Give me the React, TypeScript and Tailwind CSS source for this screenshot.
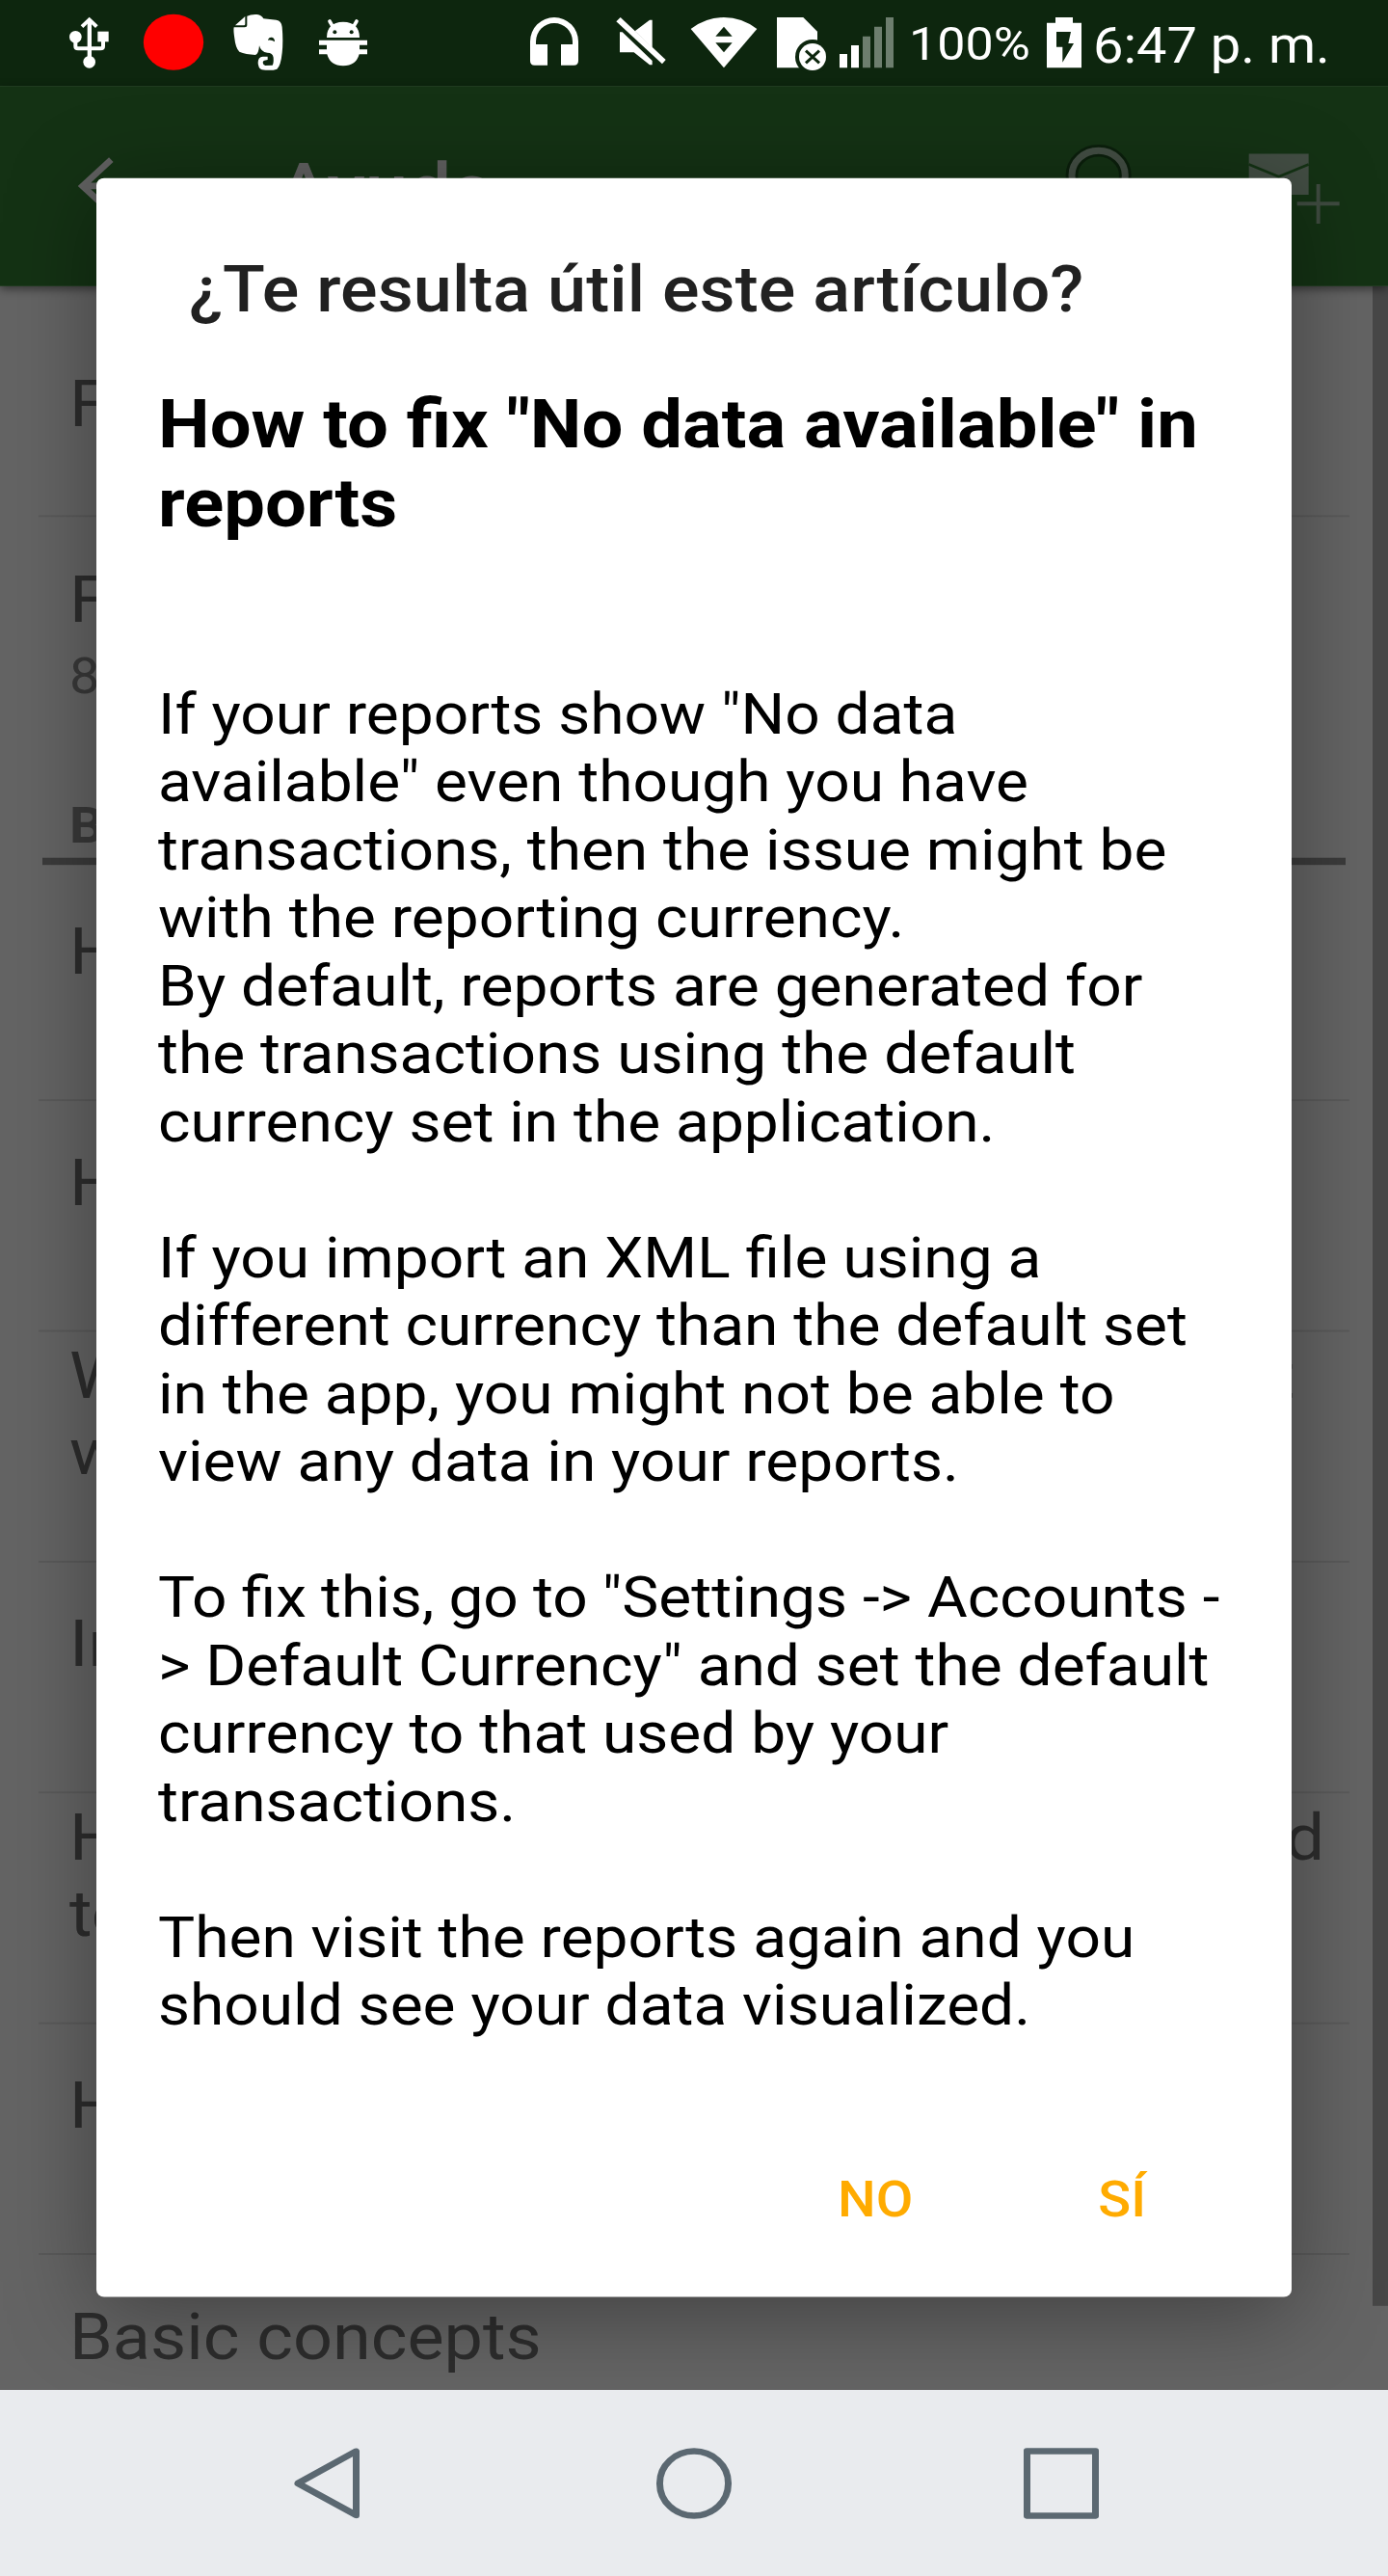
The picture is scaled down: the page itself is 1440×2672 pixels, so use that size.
import type { ReactNode } from "react";

/* Status bar glyph: drawn on a 3:2.783 grid that shares one vertical extent. */
function Glyph({ x, w, className, children }: { x: number; w: number; className: string; children: ReactNode }) {
  return (
    <svg viewBox={`${x} 40 ${w} 190`} preserveAspectRatio="none" className={`h-[68.27px] shrink-0 fill-white ${className}`}>
      {children}
    </svg>
  );
}

const DARK = "#0d260e";

function StatusBar() {
  return (
    <header className="flex h-24 items-start bg-[#0d260e] pt-[14.4px] text-white">
      <Glyph x={210} w={135} className="ml-[70px] w-[45px]">
        <rect x="272" y="70" width="13" height="120" />
        <path d="M278 54 L305 80 L297 88 L278 70 L259 88 L251 80 Z" />
        <circle cx="278" cy="194" r="19" />
        <circle cx="235" cy="116" r="19" />
        <rect x="304" y="99" width="34" height="32" />
        <path d="M235 128 V145 Q235 152 243 152 H313 Q321 152 321 145 V128" fill="none" stroke="#fff" strokeWidth="12" />
      </Glyph>
      <Glyph x={441} w={198} className="ml-8 w-[66px]">
        <ellipse cx="540" cy="132.500" rx="93.500" ry="87" fill="#ff0000" />
      </Glyph>
      <Glyph x={720} w={168} className="ml-[27px] w-[56px]">
        <path d="M732 80 L763 52 L763 76 Q763 80 759 80 Z" />
        <path d="M769 51 Q780 45 800 46 Q815 48 820 59 L860 63 Q876 65 878 85 Q882 130 878 165 Q874 205 862 216 Q845 222 815 218 Q803 212 803 196 Q803 178 818 177 L833 177 L833 187 L823 189 Q818 190 818 196 Q819 204 826 205 L848 204 Q852 198 851 180 Q849 165 832 165 Q812 163 807 143 Q805 170 795 172 Q765 170 745 162 Q733 150 730 120 Q726 95 728 86 L762 86 Q769 86 769 80 Z" />
        <path d="M834 126 Q836 116 846 117 Q855 119 855 131 Q845 124 834 126 Z" fill={DARK} />
      </Glyph>
      <Glyph x={984} w={168} className="ml-8 w-[56px]">
        <path d="M1017 118 Q1017 70 1068 69 Q1119 70 1119 118 Z" />
        <path d="M1026 67 L1037 86 M1110 67 L1099 86" stroke="#fff" strokeWidth="11" strokeLinecap="round" />
        <circle cx="1042" cy="101" r="6" fill={DARK} />
        <circle cx="1094" cy="101" r="6" fill={DARK} />
        <path d="M993 126 H1143 V141 H1119 V155 H1143 V170 H1118 Q1108 206 1068 206 Q1028 206 1018 170 H993 V155 H1017 V141 H993 Z" />
      </Glyph>

      <Glyph x={204} w={162} className="ml-[164px] w-[54px]">
        <path d="M210 130 a75 75 0 0 1 150 0 V190 q0 14 -14 14 H306 V139 H342 V130 a57 57 0 0 0 -114 0 V139 H264 V204 H224 q-14 0 -14 -14 Z" />
      </Glyph>
      <Glyph x={474} w={162} className="ml-9 w-[54px]">
        <path d="M491 55 L632 187 L621 200 L478 68 Z" />
        <path d="M489 101 H497 L590 190 V203 H582 L533 164 H489 Z" />
        <path d="M536 98 L582 63 H590 V150 Z" />
      </Glyph>
      <Glyph x={705} w={216} className="ml-[23px] w-[72px]">
        <path d="M710 91 Q757 55 813 55 Q869 55 916 91 L813 212 Z" />
        <path d="M813 84 L839 114 H787 Z M787 134 H839 L813 164 Z" fill={DARK} />
      </Glyph>
      <Glyph x={975} w={162} className="ml-[18px] w-[54px]">
        <path d="M978 55 H1060 L1104 99 V212 H978 Z" />
        <circle cx="1089" cy="178" r="54" fill={DARK} />
        <circle cx="1089" cy="178" r="42" />
        <path d="M1068 159 L1110 197 M1110 159 L1068 197" stroke={DARK} strokeWidth="9" />
      </Glyph>
      <Glyph x={1170} w={174} className="ml-[11px] w-[58px]">
        <path d="M1173 169 h24 v43 h-24 Z M1209 142 h24 v70 h-24 Z" />
        <path d="M1245 114 h24 v98 h-24 Z M1281 84 h24 v128 h-24 Z M1317 55 h24 v157 h-24 Z" fill="#6d7e6e" />
      </Glyph>
      <span className="ml-[15px] w-[126px] whitespace-nowrap pt-1 text-[52px] leading-[64px]">100%</span>
      <Glyph x={369} w={126} className="ml-[14px] w-[42px]">
        <path d="M405 55 H459 V72 H486 V212 H378 V72 H405 Z" />
        <path d="M408 100 H453 L445 136 H462 L427 195 V147 H408 Z" fill={DARK} />
      </Glyph>
      <span className="ml-[9px] whitespace-nowrap pt-[5px] text-[56px] leading-[64px]">6:47 p. m.</span>
    </header>
  );
}

function Toolbar() {
  return (
    <div className="relative z-10 flex h-56 items-start bg-[#143214] text-[#616161] shadow-[0_3px_10px_rgba(0,0,0,0.5)]">
      <svg viewBox="230 440 130 300" preserveAspectRatio="none" className="ml-[76.7px] mt-[62px] h-[107.8px] w-[43.3px]">
        <path d="M345 497 L256 579 L345 661 M256 579 H360" fill="none" stroke="#616161" strokeWidth="20" />
      </svg>
      <h1 className="ml-[168.5px] mt-[69px] w-[224px] text-[80px] font-medium leading-[94px]">Ayuda</h1>
      <svg viewBox="430 440 240 250" preserveAspectRatio="none" className="ml-[590.6px] mt-[62px] h-[89.8px] w-[80px]">
        <ellipse cx="540" cy="546" rx="83" ry="77" fill="none" stroke="#0b1f0c" strokeWidth="38" />
        <ellipse cx="540" cy="546" rx="83" ry="77" fill="none" stroke="#434e44" strokeWidth="21" />
      </svg>
      <svg viewBox="1000 440 300 270" preserveAspectRatio="none" className="ml-[110px] mt-[62px] h-[97px] w-[100px]">
        <path d="M1008 479 H1194 V606 H1008 Z" fill="#434e44" />
        <path d="M1008 512 L1101 550 L1194 512" fill="none" stroke="#143214" strokeWidth="8" />
        <path d="M1224 573 V696 M1158 634 H1290" stroke="#3f4b40" strokeWidth="12" />
      </svg>
    </div>
  );
}

function Row({ lines, tail, last }: { lines: string[]; tail?: ReactNode; last?: boolean }) {
  return (
    <li className={`mx-10 flex h-[258px] shrink-0 flex-col pl-8 ${last ? "" : "border-b-2 border-[#5a5a5a]"}`}>
      <div className="flex h-[185px] flex-col justify-center text-[72px] leading-[84.5px] text-[#2d2d2d]">
        {lines.map((line, i) => (
          <div key={line} className="flex justify-between">
            <span>{line}</span>
            {i === 0 && tail}
          </div>
        ))}
      </div>
    </li>
  );
}

function HelpList() {
  return (
    <div className="relative h-[2352px] overflow-hidden bg-[#646464]">
      <div className="mx-10 flex h-[258px] items-center border-b-2 border-[#5a5a5a] px-8 pt-[7px] text-[72px] leading-[84px] text-[#2d2d2d]">F</div>
      <div className="flex h-[381px] flex-col px-[72px] pt-[51px] text-[#2d2d2d]">
        <span className="text-[72px] leading-[84px]">F</span>
        <span className="mt-[10px] text-[56px] leading-[66px] text-[#393939]">8</span>
        <span className="mt-[101px] text-[56px] font-bold leading-[66px] text-[#393939]">B</span>
      </div>
      <div className="mx-11 h-2 bg-[#3b3b3b]" />
      <ul className="mt-[6px] flex flex-col">
        <Row lines={["H"]} />
        <Row lines={["H"]} />
        <Row lines={["W", "w"]} tail={<span className="mr-[57px]">t</span>} />
        <Row lines={["In"]} />
        <Row lines={["H", "to"]} tail={<span className="mr-[26px]">d</span>} />
        <Row lines={["H"]} />
        <Row lines={["Basic concepts"]} last />
      </ul>
      <div className="absolute right-0 top-0 h-[2258px] w-4 bg-[#474747]" />
    </div>
  );
}

const BODY: ReactNode[] = [
  'If your reports show "No data',
  'available" even though you have',
  "transactions, then the issue might be",
  "with the reporting currency.",
  "By default, reports are generated for",
  "the transactions using the default",
  "currency set in the application.",
  "",
  "If you import an XML file using a",
  "different currency than the default set",
  "in the app, you might not be able to",
  "view any data in your reports.",
  "",
  <>
    <span className="[word-spacing:-0.8px]">To fix this, go to </span>
    "Settings -&gt; Accounts -
  </>,
  '> Default Currency" and set the default',
  "currency to that used by your",
  "transactions.",
  "",
  "Then visit the reports again and you",
  "should see your data visualized.",
];

function Dialog() {
  return (
    <section className="absolute left-[100px] top-[199px] z-20 h-[2369px] w-[1240px] rounded-[8px] bg-white pt-[83px] shadow-[0_16px_96px_rgba(0,0,0,0.36)]">
      <h2 className="ml-24 whitespace-nowrap text-[72px] font-medium leading-[84px] tracking-[0.05px] text-[#212121]">¿Te resulta útil este artículo?</h2>
      <h3 className="ml-16 mt-16 whitespace-nowrap text-[76px] font-bold leading-[88px] text-black">
        How to fix "No data available" in
        <br />
        reports
      </h3>
      <div className="ml-16 mt-[154.7px] whitespace-nowrap text-[64px] leading-[76px] text-black">
        {BODY.map((line, i) => (
          <p key={i} className="h-[76px]">{line}</p>
        ))}
      </div>
      <div className="mt-[145.3px] flex justify-end gap-[192px] pr-[151px] text-[56px] font-medium leading-[66px] text-[#ffab00]">
        <button>NO</button>
        <button>SÍ</button>
      </div>
    </section>
  );
}

function NavBar() {
  return (
    <nav className="relative z-30 flex h-52 items-start bg-[#e9ebee] pt-[65px]">
      <svg viewBox="0 0 68 79" className="ml-[305px] h-[79px] w-[68px] fill-none stroke-[#5b6871]">
        <path d="M64.500 3.500 V75 L4 39.400 Z" strokeWidth="7" strokeLinejoin="round" />
      </svg>
      <div className="ml-[308px] h-[79px] w-[78px] rounded-full border-[7px] border-[#5b6871]" />
      <div className="ml-[303px] h-[79px] w-[78px] rounded-[3px] border-[7px] border-[#5b6871]" />
    </nav>
  );
}

export default function App() {
  return (
    <div className="h-[2672px] w-[1440px] overflow-hidden font-['Roboto',sans-serif]">
      <div className="relative h-[2880px] w-[1440px] origin-top scale-y-[0.92778]">
        <StatusBar />
        <Toolbar />
        <HelpList />
        <Dialog />
        <NavBar />
      </div>
    </div>
  );
}
